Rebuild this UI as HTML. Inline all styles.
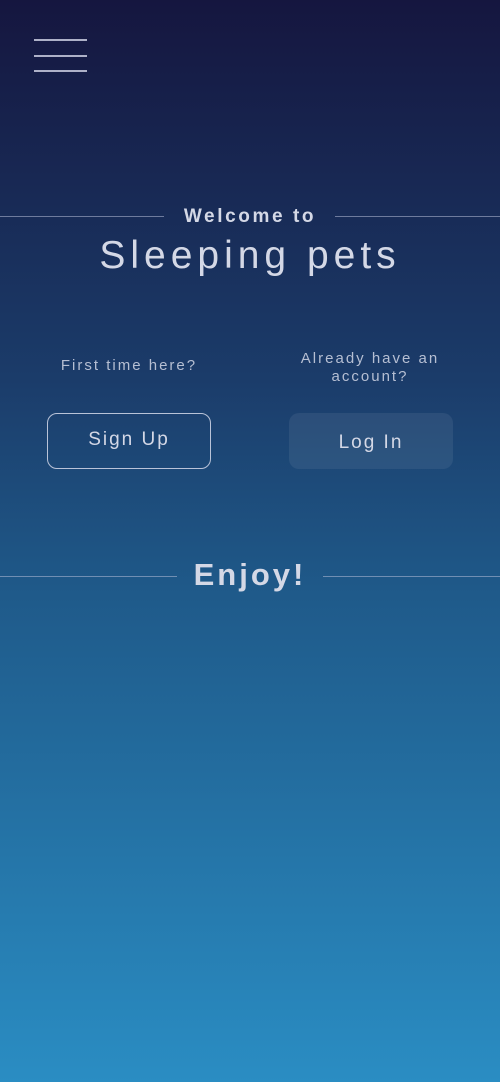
<!DOCTYPE html>
<html><head><meta charset="utf-8"><style>
html,body{margin:0;padding:0}
body{width:500px;height:1082px;position:relative;overflow:hidden;background:linear-gradient(to bottom,#15163f 0%,#1b3c6a 35%,#1f5a8a 55%,#2a8dc3 100%);font-family:"Liberation Sans",sans-serif;color:#d4d8e6}
.bar{position:absolute;left:34px;width:53px;height:2px;background:#aeb1c8}
.line{position:absolute;height:1px;background:rgba(180,190,215,0.55)}
.t{position:absolute;text-align:center;white-space:nowrap}
.btn{position:absolute;width:164px;height:56px;border-radius:10px;box-sizing:border-box;text-align:center;line-height:54px;font-size:20px;letter-spacing:2px}
</style></head><body>
<div class="bar" style="top:39px"></div>
<div class="bar" style="top:55px"></div>
<div class="bar" style="top:70px"></div>
<div class="line" style="left:0;width:164px;top:216px"></div>
<div class="line" style="left:335px;width:165px;top:216px"></div>
<div class="t" style="left:0;width:500px;top:206px;font-size:19px;letter-spacing:2.6px;font-weight:bold">Welcome to</div>
<div class="t" style="left:0;width:500px;top:234px;font-size:39px;letter-spacing:5px">Sleeping pets</div>
<div class="t" style="left:30px;width:198px;top:357px;font-size:15px;letter-spacing:2px;color:#b6bfd3">First time here?</div>
<div class="t" style="left:270px;width:200px;top:350px;font-size:15px;letter-spacing:2px;line-height:18px;color:#b6bfd3">Already have an<br>account?</div>
<div class="btn" style="left:47px;top:413px;border:1px solid #b9c3d8;line-height:52px;font-size:19px">Sign Up</div>
<div class="btn" style="left:289px;top:413px;background:rgba(255,255,255,0.07);line-height:60px;font-size:19px">Log In</div>
<div class="line" style="left:0;width:177px;top:576px"></div>
<div class="line" style="left:323px;width:177px;top:576px"></div>
<div class="t" style="left:0;width:500px;top:557px;font-size:31px;letter-spacing:3px;font-weight:bold">Enjoy!</div>
</body></html>
